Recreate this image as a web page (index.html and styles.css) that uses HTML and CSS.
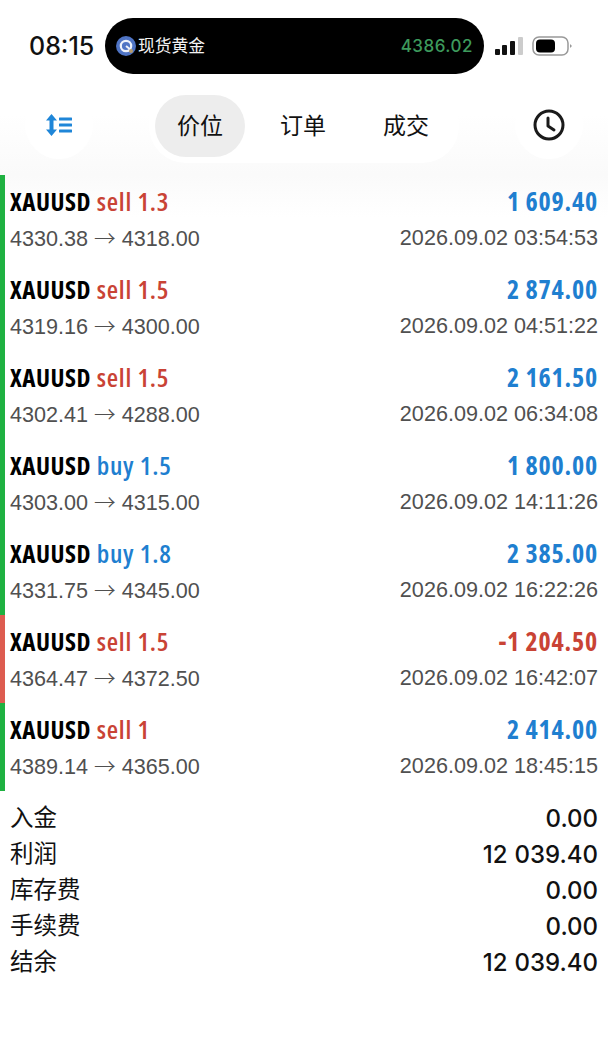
FILE: index.html
```html
<!DOCTYPE html>
<html lang="zh">
<head>
    <meta charset="UTF-8">
    <meta name="viewport" content="width=device-width, initial-scale=1.0">
    <title>History</title>
    <link rel="stylesheet" href="styles.css">
</head>
<body>
    <div class="container">
        <!-- Status bar -->
        <div class="status-bar">
            <div class="clock">08:15</div>
            <div class="island">
                <div class="island-left">
                    <svg class="island-logo" width="20" height="20" viewBox="0 0 20 20">
                        <circle cx="10" cy="10" r="10" fill="#4f74c4"/>
                        <circle cx="10" cy="10" r="5.2" fill="none" stroke="#eef2fa" stroke-width="2.2"/>
                        <path d="M10 10l5 4" stroke="#eef2fa" stroke-width="2"/>
                        <circle cx="15" cy="15" r="2" fill="#b59a6a"/>
                    </svg>
                    <span class="island-name">现货黄金</span>
                </div>
                <div class="island-price">4386.02</div>
            </div>
            <div class="status-icons">
                <svg width="28" height="18" viewBox="0 0 28 18">
                    <rect x="0" y="12" width="5" height="6" rx="1" fill="#111"/>
                    <rect x="7" y="8" width="5" height="10" rx="1" fill="#111"/>
                    <rect x="15" y="4" width="5" height="14" rx="1" fill="#111"/>
                    <rect x="23" y="0" width="5" height="18" rx="1" fill="#ccc"/>
                </svg>
                <svg width="41" height="20" viewBox="0 0 41 20">
                    <rect x="1" y="1" width="35" height="18" rx="6" fill="#fff" stroke="#999" stroke-width="1.5"/>
                    <rect x="4" y="3.500" width="19" height="13" rx="4" fill="#000"/>
                    <path d="M38 8v4l2-2z" fill="#999"/>
                </svg>
            </div>
        </div>

        <!-- Toolbar -->
        <div class="toolbar">
            <div class="round-btn">
                <svg width="28" height="24" viewBox="0 0 28 24" fill="#1f86d8">
                    <path d="M6.500 1L12 7.500H8.500v9H12L6.500 23 1 16.500h3.500v-9H1z"/>
                    <rect x="14" y="4.500" width="13" height="3" rx="0.500"/>
                    <rect x="14" y="10.500" width="13" height="3" rx="0.500"/>
                    <rect x="14" y="16.500" width="13" height="3" rx="0.500"/>
                </svg>
            </div>
            <div class="tabs">
                <div class="tab tab-active">价位</div>
                <div class="tab">订单</div>
                <div class="tab">成交</div>
            </div>
            <div class="round-btn">
                <svg width="32" height="32" viewBox="0 0 32 32" fill="none" stroke="#1a1a1a" stroke-width="3" stroke-linecap="round" stroke-linejoin="round">
                    <circle cx="16" cy="16" r="14"/>
                    <path d="M15 9v8l6 4"/>
                </svg>
            </div>
        </div>

        <!-- Deals -->
        <div class="deals">
            <div class="deal">
                <div class="deal-line">
                    <div class="deal-name"><b>XAUUSD</b> <span class="sell">sell 1.3</span></div>
                    <div class="deal-profit">1 609.40</div>
                </div>
                <div class="deal-line deal-sub"><div>4330.38 <span class="arrow">→</span> 4318.00</div><div>2026.09.02 03:54:53</div></div>
            </div>
            <div class="deal">
                <div class="deal-line">
                    <div class="deal-name"><b>XAUUSD</b> <span class="sell">sell 1.5</span></div>
                    <div class="deal-profit">2 874.00</div>
                </div>
                <div class="deal-line deal-sub"><div>4319.16 <span class="arrow">→</span> 4300.00</div><div>2026.09.02 04:51:22</div></div>
            </div>
            <div class="deal">
                <div class="deal-line">
                    <div class="deal-name"><b>XAUUSD</b> <span class="sell">sell 1.5</span></div>
                    <div class="deal-profit">2 161.50</div>
                </div>
                <div class="deal-line deal-sub"><div>4302.41 <span class="arrow">→</span> 4288.00</div><div>2026.09.02 06:34:08</div></div>
            </div>
            <div class="deal">
                <div class="deal-line">
                    <div class="deal-name"><b>XAUUSD</b> <span class="buy">buy 1.5</span></div>
                    <div class="deal-profit">1 800.00</div>
                </div>
                <div class="deal-line deal-sub"><div>4303.00 <span class="arrow">→</span> 4315.00</div><div>2026.09.02 14:11:26</div></div>
            </div>
            <div class="deal">
                <div class="deal-line">
                    <div class="deal-name"><b>XAUUSD</b> <span class="buy">buy 1.8</span></div>
                    <div class="deal-profit">2 385.00</div>
                </div>
                <div class="deal-line deal-sub"><div>4331.75 <span class="arrow">→</span> 4345.00</div><div>2026.09.02 16:22:26</div></div>
            </div>
            <div class="deal deal-loss">
                <div class="deal-line">
                    <div class="deal-name"><b>XAUUSD</b> <span class="sell">sell 1.5</span></div>
                    <div class="deal-profit">-1 204.50</div>
                </div>
                <div class="deal-line deal-sub"><div>4364.47 <span class="arrow">→</span> 4372.50</div><div>2026.09.02 16:42:07</div></div>
            </div>
            <div class="deal">
                <div class="deal-line">
                    <div class="deal-name"><b>XAUUSD</b> <span class="sell">sell 1</span></div>
                    <div class="deal-profit">2 414.00</div>
                </div>
                <div class="deal-line deal-sub"><div>4389.14 <span class="arrow">→</span> 4365.00</div><div>2026.09.02 18:45:15</div></div>
            </div>
        </div>

        <!-- Summary -->
        <div class="summary">
            <div class="summary-row"><div class="summary-label">入金</div><div>0.00</div></div>
            <div class="summary-row"><div class="summary-label">利润</div><div>12 039.40</div></div>
            <div class="summary-row"><div class="summary-label">库存费</div><div>0.00</div></div>
            <div class="summary-row"><div class="summary-label">手续费</div><div>0.00</div></div>
            <div class="summary-row"><div class="summary-label">结余</div><div>12 039.40</div></div>
        </div>
    </div>
</body>
</html>
```

FILE: styles.css
```css
* {
    margin: 0;
    padding: 0;
    box-sizing: border-box;
}

body {
    background-color: #fff;
    font-family: "Liberation Sans", "Noto Sans CJK SC", sans-serif;
    color: #000;
}

.container {
    width: 608px;
    height: 1045px;
    overflow: hidden;
    background-color: #fff;
}

/* Status bar */
.status-bar {
    display: flex;
    align-items: center;
    height: 56px;
    margin-top: 18px;
    padding-left: 29px;
}

.clock {
    width: 76px;
    font-size: 25px;
    font-weight: 500;
    font-family: Inter, "Liberation Sans", sans-serif;
    color: #111;
}

.island {
    display: flex;
    align-items: center;
    justify-content: space-between;
    width: 379px;
    height: 56px;
    padding: 0 11px 0 11px;
    border-radius: 28px;
    background-color: #000;
}

.island-left {
    display: flex;
    align-items: center;
    gap: 2px;
    color: #f2f2f2;
    font-size: 16.8px;
}

.island-name {
    padding-bottom: 2px;
}

.island-price {
    color: #3d9a5c;
    font-size: 17px;
    letter-spacing: 0.5px;
    font-family: Inter, "Liberation Sans", sans-serif;
    font-weight: 500;
}

.status-icons {
    display: flex;
    align-items: center;
    gap: 9px;
    margin-left: 11px;
}

/* Toolbar */
.toolbar {
    display: flex;
    align-items: center;
    height: 101px;
    padding: 16px 25px 14px;
    background: linear-gradient(#fff 40%, #fafafa);
}

.round-btn {
    display: flex;
    flex: none;
    align-items: center;
    justify-content: center;
    width: 68px;
    height: 68px;
    margin-bottom: 2px;
    border-radius: 50%;
    background-color: #fff;
}

.tabs {
    display: flex;
    flex: none;
    align-items: center;
    gap: 13px;
    width: 310px;
    height: 75px;
    margin: 0 56px;
    padding: 0 6px;
    border-radius: 37px;
    background-color: #fff;
}

.tab {
    display: flex;
    flex: none;
    align-items: center;
    justify-content: center;
    width: 90px;
    height: 62px;
    padding-bottom: 3px;
    border-radius: 31px;
    font-size: 23px;
    color: #111;
}

.tab-active {
    background-color: #ededed;
}

/* Deals */
.deals {
    background: linear-gradient(#fafafa, #fff 42px);
}

.deal {
    height: 88px;
    padding: 8px 10px 0 5px;
    border-left: 5px solid #1fb141;
}

.deal-loss {
    border-left-color: #dd5c50;
}

.deal-line {
    display: flex;
    justify-content: space-between;
    align-items: center;
}

.deal-name {
    font-family: "Open Sans", "Liberation Sans", sans-serif;
    font-stretch: 75%;
    font-size: 26px;
    line-height: 36px;
    font-weight: 600;
}

.deal-name b {
    font-size: 25px;
    font-weight: 700;
    letter-spacing: 0.5px;
    margin-right: 1px;
}

.sell {
    color: #c94335;
    letter-spacing: 0.75px;
}

.buy {
    color: #1f7fd0;
    letter-spacing: 0.75px;
}

.deal-profit {
    font-family: "Open Sans", "Liberation Sans", sans-serif;
    font-stretch: 75%;
    font-size: 26px;
    line-height: 36px;
    font-weight: 700;
    letter-spacing: 0.8px;
    color: #1f7fd0;
}

.deal-loss .deal-profit {
    color: #c94335;
}

.deal-sub {
    font-size: 21.6px;
    line-height: 36px;
    font-kerning: none;
    color: #505050;
}

.arrow {
    font-family: "Noto Sans CJK SC", sans-serif;
    font-weight: 300;
}

/* Summary */
.summary {
    padding: 9px 10px 0;
}

.summary-row {
    display: flex;
    justify-content: space-between;
    align-items: center;
    height: 36px;
    font-family: Inter, "Liberation Sans", sans-serif;
    font-size: 24px;
    font-weight: 500;
    word-spacing: 0.5px;
    color: #111;
}

.summary-label {
    font-family: "Liberation Sans", "Noto Sans CJK SC", sans-serif;
    font-size: 23.5px;
    font-weight: 400;
    padding-bottom: 4px;
}
```
